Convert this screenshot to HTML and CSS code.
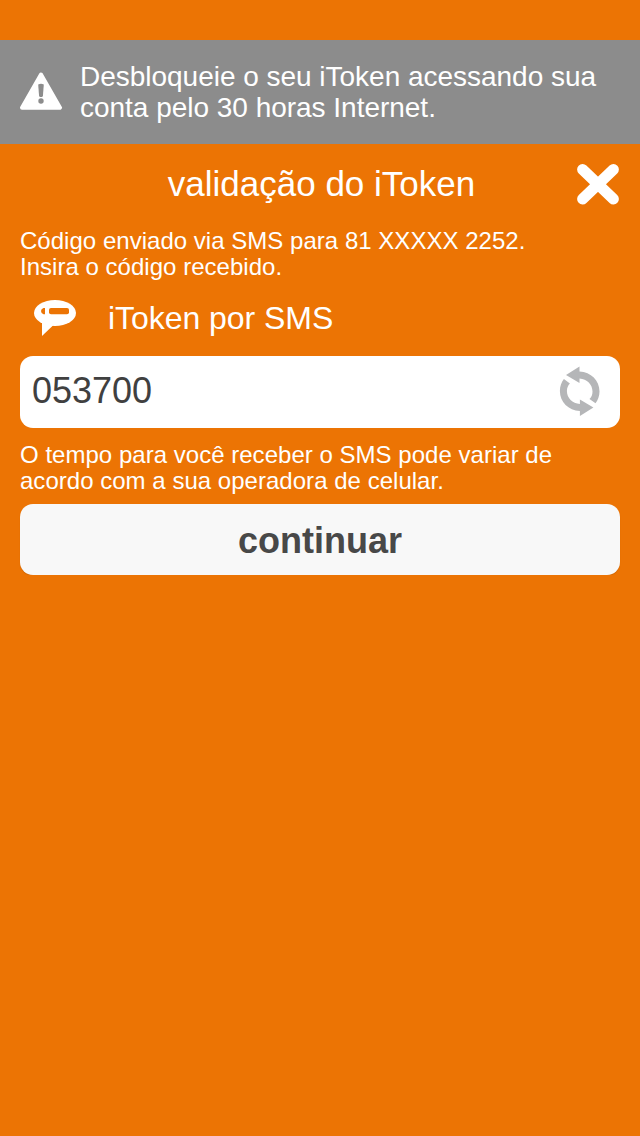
FILE: index.html
```html
<!DOCTYPE html>
<html lang="pt-BR">
<head>
  <meta charset="UTF-8" />
  <title>validação do iToken</title>
  <link rel="stylesheet" href="styles.css">
</head>
<body>

  <div class="alert">
    <svg class="alert-icon" width="44" height="40" viewBox="0 0 44 40">
      <path d="M22 2.500 L41 35.700 H3 Z" fill="#fff" stroke="#fff" stroke-width="4" stroke-linejoin="round" />
      <path d="M19.200 12.600 Q22 11 24.800 12.600 L23.900 24.200 Q22 26 20.100 24.200 Z" fill="#8c8c8c" />
      <circle cx="22" cy="29" r="2.700" fill="#8c8c8c" />
    </svg>
    <p class="alert-text">Desbloqueie o seu iToken acessando sua<br>conta pelo 30 horas Internet.</p>
  </div>

  <header class="header">
    <h1 class="title">validação do iToken</h1>
    <button class="close" aria-label="fechar">
      <svg width="44" height="42" viewBox="0 0 44 42">
        <path d="M6.600 6.500 L37.400 36 M37.400 6.500 L6.600 36" stroke="#fff" stroke-width="11" stroke-linecap="round" />
      </svg>
    </button>
  </header>

  <main class="content">
    <p class="text">Código enviado via SMS para 81 XXXXX 2252.<br>Insira o código recebido.</p>

    <div class="method">
      <svg class="method-icon" width="44" height="38" viewBox="0 0 44 38">
        <ellipse cx="22" cy="14" rx="21" ry="13" fill="#fff" />
        <path d="M9 22 V37 L20.500 26 Z" fill="#fff" />
        <rect x="16" y="9" width="20" height="6.200" rx="2" fill="#ec7404" />
        <path d="M12 9 H10.500 Q8 10 8 12 Q8 14.300 10.500 15.200 H12 Z" fill="#ec7404" />
      </svg>
      <span class="method-name">iToken por SMS</span>
    </div>

    <div class="field">
      <span class="code">053700</span>
      <svg class="refresh" width="42" height="50" viewBox="0 0 42 50">
        <g id="arrow" fill="#b5b6b8">
          <path d="M7 9 L20.500 0.500 V5.500 C32 6 40.500 14.500 40.500 25.500 C40.500 30 39 34 36.500 37.300 L30.500 33 C32.500 31 33.500 28.500 33.500 25.500 C33.500 18.500 28 13 20.500 12.500 V17 Z" />
        </g>
        <use href="#arrow" transform="rotate(180 20.700 25.200)" />
      </svg>
    </div>

    <p class="text">O tempo para você receber o SMS pode variar de<br>acordo com a sua operadora de celular.</p>

    <button class="submit">continuar</button>
  </main>

</body>
</html>
```
FILE: styles.css
```css
body {
  background-color: #ec7404;
  color: #fff;
  font-family: "Liberation Sans", Arial, sans-serif;
  margin: 0;
  padding-top: 40px;
}
p, h1 {
  margin: 0;
  font-weight: normal;
  white-space: nowrap;
}
svg {
  display: block;
  fill: none;
}
button {
  border: none;
  padding: 0;
  font-family: inherit;
  cursor: pointer;
}
.alert {
  display: flex;
  align-items: center;
  height: 104px;
  box-sizing: border-box;
  padding-left: 19px;
  background-color: #8c8c8c;
}
.alert-icon {
  margin-right: 17px;
}
.alert-text {
  font-size: 28px;
  line-height: 31px;
  letter-spacing: -0.02px;
}
.header {
  display: grid;
  grid-template-columns: 44px 1fr 44px;
  align-items: center;
  height: 84px;
  box-sizing: border-box;
  padding: 0 20px 4px;
}
.title {
  grid-column: 2;
  padding-left: 3px;
  text-align: center;
  font-size: 35px;
}
.close {
  background: none;
}
.content {
  padding: 0 20px;
}
.text {
  font-size: 24px;
  line-height: 26px;
  letter-spacing: 0.025px;
}
.method {
  display: flex;
  align-items: center;
  height: 76px;
  padding-left: 13px;
}
.method-icon {
  margin-right: 31px;
}
.method-name {
  font-size: 32px;
  letter-spacing: -0.05px;
}
.field {
  display: flex;
  align-items: center;
  justify-content: space-between;
  height: 72px;
  box-sizing: border-box;
  margin-bottom: 14px;
  padding: 0 19px 2px 12px;
  background-color: #fff;
  border-radius: 13px;
}
.code {
  color: #404040;
  font-size: 36px;
}
.submit {
  display: block;
  width: 100%;
  height: 71px;
  margin-top: 10px;
  padding-top: 2px;
  background-color: #f8f8f8;
  border-radius: 13px;
  box-shadow: 0 1px 1px #d26703;
  color: #484848;
  font-size: 36px;
  font-weight: bold;
}
```
